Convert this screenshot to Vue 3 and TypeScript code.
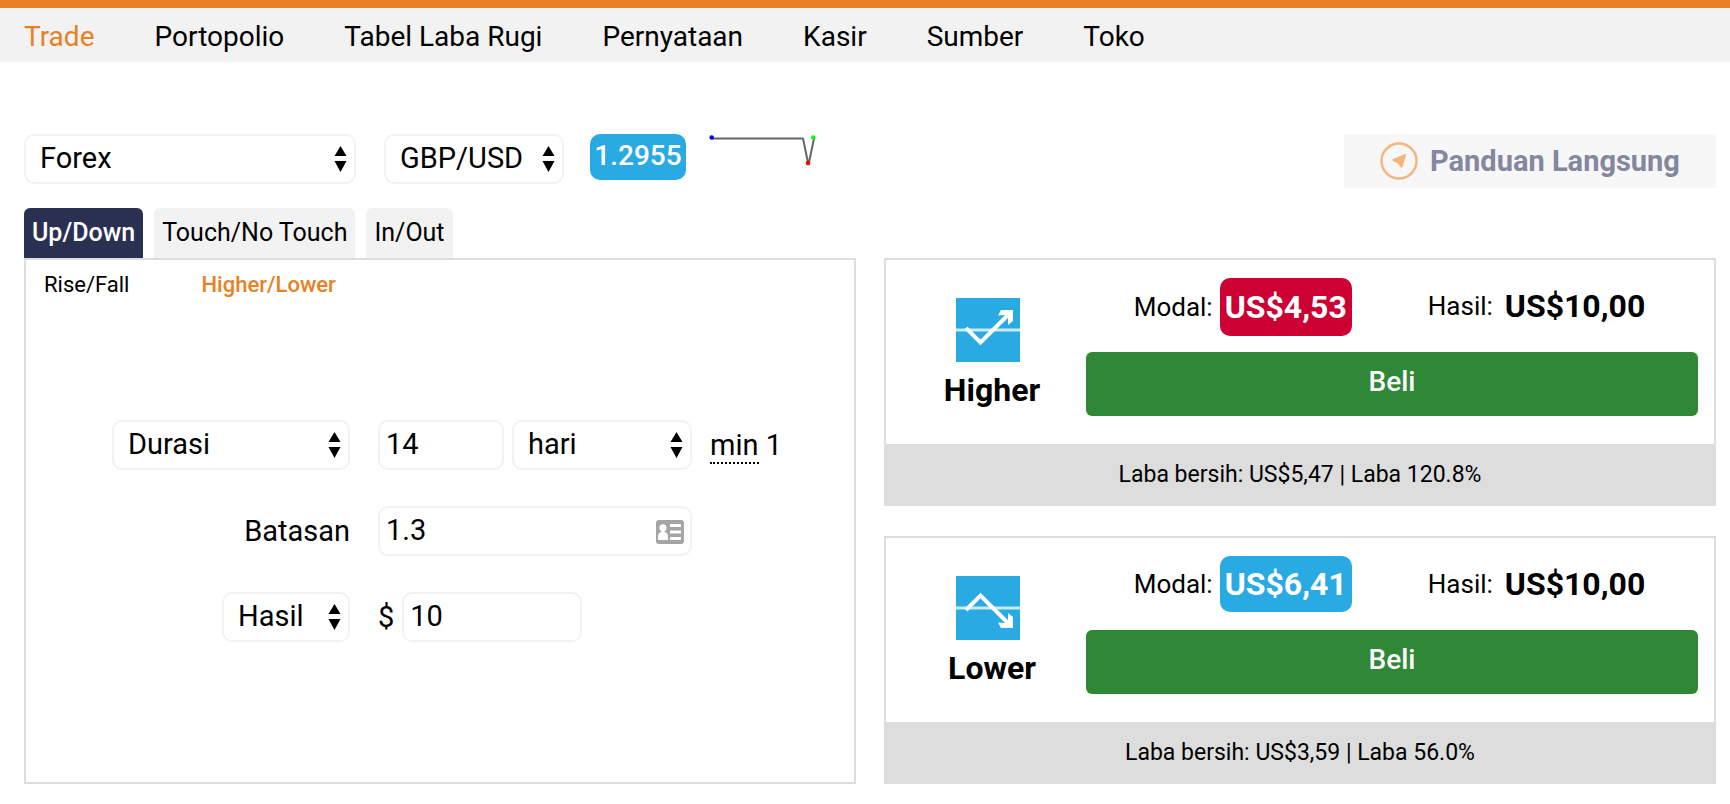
<script setup lang="ts">
import { ref } from 'vue'

interface Contract {
  id: string
  name: string
  stake: string
  payout: string
  note: string
  rising: boolean
}

const menu: string[] = ['Trade', 'Portopolio', 'Tabel Laba Rugi', 'Pernyataan', 'Kasir', 'Sumber', 'Toko']
const tabs: string[] = ['Up/Down', 'Touch/No Touch', 'In/Out']
const subTabs: string[] = ['Rise/Fall', 'Higher/Lower']

const activeMenu = ref('Trade')
const activeTab = ref('Up/Down')
const activeSubTab = ref('Higher/Lower')

const market = ref('Forex')
const symbol = ref('GBP/USD')
const expiry = ref('Durasi')
const duration = ref('14')
const unit = ref('hari')
const barrier = ref('1.3')
const amountType = ref('Hasil')
const amount = ref('10')

const contracts: Contract[] = [
  { id: 'higher', name: 'Higher', stake: 'US$4,53', payout: 'US$10,00', note: 'Laba bersih: US$5,47 | Laba 120.8%', rising: false },
  { id: 'lower', name: 'Lower', stake: 'US$6,41', payout: 'US$10,00', note: 'Laba bersih: US$3,59 | Laba 56.0%', rising: true },
]
</script>

<template>
  <div class="page">
    <header class="topbar">
      <nav class="menu">
        <a
          v-for="item in menu"
          :key="item"
          href="#"
          :class="{ active: item === activeMenu }"
          @click.prevent="activeMenu = item"
        >{{ item }}</a>
      </nav>
    </header>

    <main class="content">
      <div class="toolbar">
        <div class="select market">
          <select v-model="market" aria-label="Forex"><option>Forex</option></select>
          <svg class="arrows" viewBox="0 0 12 26"><path d="M6 0L12 10H0ZM0 15H12L6 26Z" /></svg>
        </div>
        <div class="select symbol">
          <select v-model="symbol" aria-label="GBP/USD"><option>GBP/USD</option></select>
          <svg class="arrows" viewBox="0 0 12 26"><path d="M6 0L12 10H0ZM0 15H12L6 26Z" /></svg>
        </div>
        <span class="spot">1.2955</span>
        <svg class="spark" viewBox="0 0 108 36">
          <path d="M4 4.500H95L100.500 31L106 4.500" fill="none" stroke="#666" stroke-width="2" stroke-linejoin="bevel" />
          <circle cx="3.700" cy="3.500" r="2.300" fill="#00f" />
          <circle cx="100" cy="29" r="2.300" fill="#f00" />
          <circle cx="105.300" cy="3.500" r="2.300" fill="#0f0" />
        </svg>
        <a class="guide" href="#">
          <svg viewBox="0 0 38 38">
            <circle cx="19" cy="19" r="17.500" fill="none" stroke="#f4b57c" stroke-width="2.400" />
            <path d="M13.500 18L25 13.200L21.500 24.500L18.500 20.500Z" fill="#f4b57c" stroke="#f4b57c" stroke-width="2.200" stroke-linejoin="round" />
          </svg>
          <span>Panduan Langsung</span>
        </a>
      </div>

      <div class="tabs" role="tablist">
        <button
          v-for="tab in tabs"
          :key="tab"
          type="button"
          role="tab"
          :aria-selected="tab === activeTab"
          :class="{ active: tab === activeTab }"
          @click="activeTab = tab"
        >{{ tab }}</button>
      </div>

      <div class="columns">
        <section class="panel">
          <div class="subtabs">
            <a
              v-for="sub in subTabs"
              :key="sub"
              href="#"
              :class="{ active: sub === activeSubTab }"
              @click.prevent="activeSubTab = sub"
            >{{ sub }}</a>
          </div>

          <form class="form" @submit.prevent>
            <div class="lead">
              <div class="select expiry">
                <select v-model="expiry" aria-label="Durasi"><option>Durasi</option></select>
                <svg class="arrows" viewBox="0 0 12 26"><path d="M6 0L12 10H0ZM0 15H12L6 26Z" /></svg>
              </div>
            </div>
            <div class="fields">
              <input v-model="duration" class="box short" type="text" aria-label="Durasi" />
              <div class="select unit">
                <select v-model="unit" aria-label="hari"><option>hari</option></select>
                <svg class="arrows" viewBox="0 0 12 26"><path d="M6 0L12 10H0ZM0 15H12L6 26Z" /></svg>
              </div>
              <span class="minimum"><abbr title="minimum">min</abbr> 1</span>
            </div>

            <div class="lead"><label for="barrier">Batasan</label></div>
            <div class="fields">
              <div class="barrier">
                <input id="barrier" v-model="barrier" class="box" type="text" />
                <svg class="card-icon" viewBox="0 0 28 24">
                  <rect width="28" height="24" rx="3" fill="#a5a5a5" />
                  <path d="M14 4H25V7H14ZM14 10.500H25V13.500H14ZM14 17H25V20H14Z" fill="#fff" />
                  <circle cx="7" cy="7.800" r="3.600" fill="#fff" />
                  <path d="M2 20V16.500Q2 13 5 12L7 10.500L9 12Q12 13 12 16.500V20Z" fill="#fff" />
                </svg>
              </div>
            </div>

            <div class="lead">
              <div class="select kind">
                <select v-model="amountType" aria-label="Hasil"><option>Hasil</option></select>
                <svg class="arrows" viewBox="0 0 12 26"><path d="M6 0L12 10H0ZM0 15H12L6 26Z" /></svg>
              </div>
            </div>
            <div class="fields">
              <label for="amount">$</label>
              <input id="amount" v-model="amount" class="box amount" type="text" />
            </div>
          </form>
        </section>

        <div class="contracts">
          <section v-for="contract in contracts" :key="contract.id" class="contract">
            <div class="body">
              <div class="direction">
                <svg viewBox="0 0 64 64">
                  <rect width="64" height="64" fill="#2aaae2" />
                  <path d="M0 32H64" stroke="#fff" stroke-opacity=".75" stroke-width="3" />
                  <g :transform="contract.id === 'lower' ? 'matrix(1 0 0 -1 0 64)' : undefined">
                    <path d="M10 30L24.500 44.500L53 16" fill="none" stroke="#fff" stroke-width="4" />
                    <path d="M45 12H57V23L52 27V19L49 17L42 17.500Z" fill="#fff" />
                  </g>
                </svg>
                <strong>{{ contract.name }}</strong>
              </div>
              <div class="deal">
                <div class="amounts">
                  <div class="pair">
                    <span>Modal:</span>
                    <strong class="badge" :class="contract.rising ? 'steady' : 'fallen'">{{ contract.stake }}</strong>
                  </div>
                  <div class="pair">
                    <span>Hasil:</span>
                    <strong class="badge">{{ contract.payout }}</strong>
                  </div>
                </div>
                <button type="button" class="buy">Beli</button>
              </div>
            </div>
            <p class="note">{{ contract.note }}</p>
          </section>
        </div>
      </div>
    </main>
  </div>
</template>

<style>
body {
  margin: 0;
  background: #fff;
}
</style>

<style scoped>
.page {
  font-family: Roboto, "Liberation Sans", sans-serif;
  font-size: 28px;
  line-height: 36px;
  color: #000;
}

.page * {
  box-sizing: border-box;
}

a {
  color: inherit;
  text-decoration: none;
}

button,
input,
select {
  font: inherit;
  color: inherit;
}

.topbar {
  border-top: 8px solid #e98024;
  background: #f2f2f2;
}

.menu {
  display: flex;
  gap: 60px;
  padding: 11px 24px 7px;
}

.menu .active {
  color: #e98024;
}

.content {
  padding: 72px 14px 20px 24px;
}

.toolbar {
  display: flex;
  align-items: flex-start;
}

.select {
  position: relative;
  font-size: 29px;
}

.select select {
  display: block;
  width: 100%;
  height: 50px;
  padding: 0 32px 2px 14px;
  border: 2px solid #f2f2f2;
  border-radius: 10px;
  background: #fff;
  appearance: none;
}

.arrows {
  position: absolute;
  top: 12px;
  right: 9px;
  width: 13px;
  height: 26px;
  pointer-events: none;
}

.market {
  width: 332px;
  margin-right: 28px;
}

.symbol {
  width: 180px;
  margin-right: 26px;
}

.spot {
  width: 96px;
  height: 46px;
  padding-top: 4px;
  border-radius: 10px;
  background: #2aaae2;
  color: #fff;
  font-weight: 500;
  text-align: center;
}

.spark {
  width: 108px;
  height: 36px;
  margin-left: 22px;
}

.guide {
  display: flex;
  align-items: center;
  justify-content: center;
  gap: 12px;
  width: 372px;
  height: 54px;
  margin-left: auto;
  background: #f7f7f7;
  color: #8487a0;
  font-size: 29px;
  font-weight: 700;
}

.guide svg {
  width: 38px;
  height: 38px;
}

.tabs {
  display: flex;
  gap: 11px;
  margin-top: 20px;
}

.tabs button {
  height: 50px;
  padding: 0 8px;
  border: 0;
  border-radius: 6px 6px 0 0;
  background: #f2f2f2;
  font-size: 25px;
}

.tabs .active {
  background: #2a3052;
  color: #fff;
  font-weight: 500;
}

.columns {
  display: grid;
  grid-template-columns: 1fr 1fr;
  gap: 28px;
}

.panel {
  border: 2px solid #ddd;
}

.subtabs {
  display: flex;
  gap: 72px;
  padding: 7px 18px 5px;
  font-size: 22px;
}

.subtabs .active {
  color: #e98024;
  font-weight: 500;
}

.form {
  display: grid;
  grid-template-columns: 324px 1fr;
  gap: 36px 28px;
  padding: 112px 0 20px;
  font-size: 29px;
}

.lead {
  display: flex;
  align-items: center;
  justify-content: flex-end;
}

.fields {
  display: flex;
  align-items: center;
  gap: 8px;
}

.expiry {
  width: 238px;
}

.kind {
  width: 128px;
}

.unit {
  width: 180px;
}

.box {
  height: 50px;
  padding: 0 6px 2px;
  border: 2px solid #f2f2f2;
  border-radius: 10px;
  background: #fff;
}

.short {
  width: 126px;
}

.minimum {
  margin-left: 10px;
}

.minimum abbr {
  border-bottom: 2px dotted #000;
  text-decoration: none;
}

.barrier {
  position: relative;
  width: 314px;
}

.barrier .box {
  display: block;
  width: 100%;
}

.card-icon {
  position: absolute;
  top: 14px;
  right: 8px;
  width: 28px;
  height: 24px;
}

.amount {
  width: 180px;
}

.contracts {
  display: grid;
  gap: 30px;
}

.contract {
  border: 2px solid #ddd;
}

.body {
  display: flex;
  padding: 18px 16px 28px 12px;
}

.direction {
  display: flex;
  flex-direction: column;
  align-items: center;
  gap: 10px;
  width: 188px;
  padding-top: 20px;
}

.direction svg {
  width: 64px;
  height: 64px;
  margin-right: 8px;
}

.direction strong {
  font-size: 32px;
}

.deal {
  flex: 1;
}

.amounts {
  display: flex;
  align-items: flex-start;
  justify-content: center;
  gap: 76px;
  height: 74px;
}

.pair {
  display: flex;
  align-items: center;
  gap: 7px;
  font-size: 26px;
}

.badge {
  padding: 9px 5px;
  border-radius: 10px;
  font-size: 32px;
  line-height: 38px;
}

.fallen {
  padding: 10px 5px;
  background: #cc0033;
  color: #fff;
}

.steady {
  background: #2aaae2;
  color: #fff;
}

.buy {
  display: block;
  width: 100%;
  height: 64px;
  padding: 0 0 4px;
  border: 0;
  border-radius: 6px;
  background: #2e8836;
  color: #fff;
  font-weight: 500;
}

.note {
  margin: 0;
  padding: 13px 0 11px;
  background: #ddd;
  font-size: 23px;
  text-align: center;
}
</style>
